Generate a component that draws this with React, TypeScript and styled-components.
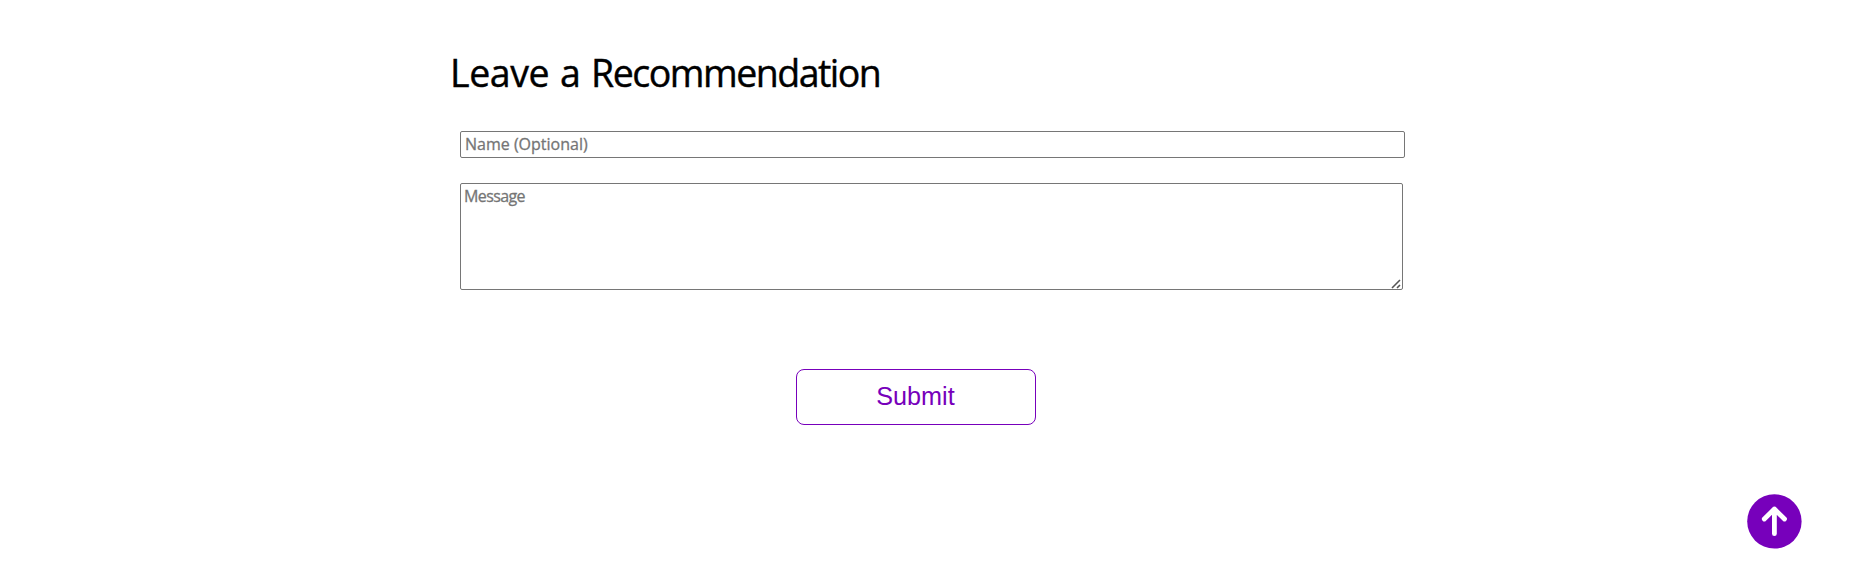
import React from "react";
import styled, { createGlobalStyle } from "styled-components";

const GlobalStyle = createGlobalStyle`
  * { box-sizing: border-box; }
  body {
    margin: 0;
    background: #fff;
    overflow: hidden;
    font-family: "Trebuchet MS", "Open Sans", sans-serif;
  }
`;

const Page = styled.main`
  position: relative;
  height: 573px;
  padding: 46px 0 0 450px;
`;

const Form = styled.form`
  display: flex;
  flex-direction: column;
  align-items: flex-start;
  width: 955px;
`;

const Title = styled.h1`
  margin: 0 0 32px;
  height: 53px;
  font-size: 37.5px;
  font-weight: 400;
  line-height: 53px;
  letter-spacing: -0.4px;
  word-spacing: 1.3px;
  white-space: nowrap;
  color: #000;
  -webkit-text-stroke: 0.4px #000;
`;

const TightWord = styled.span`
  letter-spacing: -1.5px;
`;

const NameField = styled.input`
  width: 945px;
  height: 27px;
  margin: 0 0 25px 10px;
  padding: 0 3px 2px 4px;
  border: 1px solid #767676;
  border-radius: 2px;
  font-family: inherit;
  font-size: 16px;
  letter-spacing: 0;
  &::placeholder { color: #757575; -webkit-text-stroke: 0.3px #757575; }
`;

const MessageBox = styled.div`
  position: relative;
  width: 943px;
  height: 107px;
  margin: 0 0 79px 10px;
`;

const MessageField = styled.textarea`
  display: block;
  width: 100%;
  height: 100%;
  padding: 2px 2px 2px 3px;
  border: 1px solid #767676;
  border-radius: 2px;
  font-family: inherit;
  font-size: 16px;
  line-height: 20px;
  letter-spacing: -0.6px;
  resize: none;
  &::placeholder { color: #757575; -webkit-text-stroke: 0.3px #757575; }
`;

const ResizeGrip = styled.svg`
  position: absolute;
  right: 2px;
  bottom: 1px;
  pointer-events: none;
`;

const SubmitButton = styled.button`
  width: 240px;
  height: 56px;
  margin-left: 346px;
  padding: 0 1px 2px 0;
  border: 1px solid #7700bb;
  border-radius: 8px;
  background: #fff;
  color: #7700bb;
  font-family: "Liberation Sans", Arial, sans-serif;
  font-size: 25.2px;
`;

const TopButton = styled.a`
  position: absolute;
  left: 1747px;
  top: 494px;
  width: 55px;
  height: 55px;
`;

export default function App() {
  return (
    <Page>
      <GlobalStyle />
      <Form>
        <Title>
          Leave a <TightWord>Recommendation</TightWord>
        </Title>
        <NameField type="text" placeholder="Name (Optional)" />
        <MessageBox>
          <MessageField placeholder="Message" />
          <ResizeGrip width="10" height="10" viewBox="0 0 10 10">
            <path d="M1 9L9 1M6 9L9 6" stroke="#555" strokeWidth="1.6" fill="none" />
          </ResizeGrip>
        </MessageBox>
        <SubmitButton type="button">Submit</SubmitButton>
      </Form>
      <TopButton href="#" aria-label="Back to top">
        <svg width="55" height="55" viewBox="0 0 55 55">
          <circle cx="27.4" cy="27.4" r="27.2" fill="#7700bb" />
          <path
            d="M27.4 39.7V15M17.3 25L27.4 15L37.5 25"
            fill="none"
            stroke="#fff"
            strokeWidth="4.8"
            strokeLinecap="round"
            strokeLinejoin="round"
          />
        </svg>
      </TopButton>
    </Page>
  );
}
